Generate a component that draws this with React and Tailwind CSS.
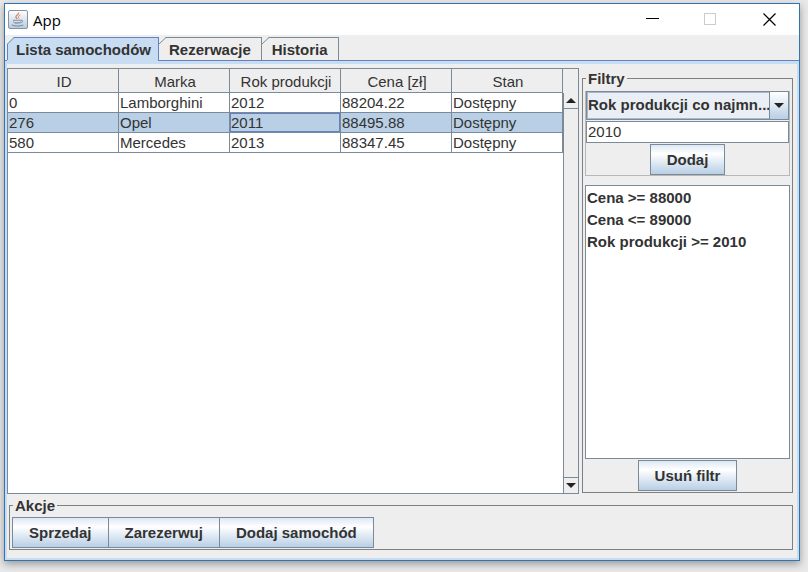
import React, { useState } from "react";

const TABS = ["Lista samochodów", "Rezerwacje", "Historia"];
const COLUMNS = ["ID", "Marka", "Rok produkcji", "Cena [zł]", "Stan"];
const CARS = [
  ["0", "Lamborghini", "2012", "88204.22", "Dostępny"],
  ["276", "Opel", "2011", "88495.88", "Dostępny"],
  ["580", "Mercedes", "2013", "88347.45", "Dostępny"],
];
const FILTERS = ["Cena >= 88000", "Cena <= 89000", "Rok produkcji >= 2010"];

function MetalButton({ children, className = "" }) {
  return (
    <button
      type="button"
      className={`h-[31px] border border-[#7a8a99] bg-linear-to-b from-[#dde8f3] via-white via-30% to-[#b8cfe5] px-4 text-[15px] leading-none font-bold whitespace-nowrap ${className}`}
    >
      {children}
    </button>
  );
}

function JavaIcon() {
  return (
    <svg width="20" height="20" viewBox="0 0 20 20" aria-hidden="true">
      <defs>
        <linearGradient id="tile" x1="0" y1="0" x2="0" y2="1">
          <stop offset="0" stopColor="#ffffff" />
          <stop offset="1" stopColor="#bccbd8" />
        </linearGradient>
      </defs>
      <rect x="0.5" y="0.5" width="19" height="18" rx="1.5" fill="url(#tile)" stroke="#8193a5" />
      <path d="M10.500 2.500c1 2-3 2.800-2.600 4.500.1 1 .9 1.300 1.200 2.100" fill="none" stroke="#d9825a" strokeWidth="1.300" />
      <path d="M12.300 5c-1.600.6-2.500 1.700-1.400 3.600" fill="none" stroke="#d9825a" />
      <path d="M5 9.800h8c0 2-.6 3.200-1.700 4H7C5.600 13 5 11.800 5 9.800z" fill="#8ba3ba" />
      <path d="M13 10.300c2.600-.3 2.200 2.200-.8 2.500M3.800 15c2.700 1.400 9 1.400 11.500 0" fill="none" stroke="#6d8aa8" />
      <path d="M6 11.500h6.200" stroke="#dbe4ec" />
    </svg>
  );
}

function Arrow({ up = false }) {
  return (
    <svg width="10" height="5" viewBox="0 0 10 5" aria-hidden="true">
      <path d={up ? "M0 5L5 0L10 5z" : "M0 0L5 5L10 0z"} fill="#222" />
    </svg>
  );
}

function TitleBar() {
  return (
    <header className="flex h-[31px] items-center bg-white pl-[3px]">
      <JavaIcon />
      <h1 className="ml-[5px] flex-1 font-['Open_Sans',sans-serif] text-[15px] leading-5 text-black">App</h1>
      <button type="button" aria-label="Minimalizuj" className="flex h-full w-[58px] items-center justify-center">
        <svg width="13" height="13"><path d="M0 5.500h13" stroke="#000" /></svg>
      </button>
      <button type="button" aria-label="Maksymalizuj" disabled className="flex h-full w-[58px] items-center justify-center">
        <svg width="12" height="13"><rect x="0.5" y="0.5" width="11" height="11" fill="none" stroke="#ccc" /></svg>
      </button>
      <button type="button" aria-label="Zamknij" className="flex h-full w-[60px] items-center justify-center">
        <svg width="13" height="13"><path d="M0.500 0.500l12 12M12.500 0.500l-12 12" stroke="#000" strokeWidth="1.200" /></svg>
      </button>
    </header>
  );
}

function Tabs({ active, onSelect }) {
  return (
    <div role="tablist" className="flex h-[26px] items-end border-b border-[#6382bf] bg-[#eee] pl-[2px]">
      {TABS.map((tab, i) => (
        <button
          key={tab}
          type="button"
          role="tab"
          aria-selected={i === active}
          onClick={() => onSelect(i)}
          className={`relative border-t border-r text-[15px] leading-none font-bold ${
            i === active
              ? "-mb-px h-[24px] border-[#6382bf] bg-[#c8ddf2] pr-[7px] pl-[9px]"
              : "h-[23px] border-[#7a8a99] bg-[#eee] px-[10px]"
          }`}
        >
          <svg className="absolute -top-px left-0" width="7" height="23" aria-hidden="true">
            <path d="M0 0H7L0 7z" fill="#eee" />
            <path d={i === active ? "M7 0.500L0.500 7V23" : "M7 0.500L0 7"} fill="none" stroke={i === active ? "#6382bf" : "#7a8a99"} />
          </svg>
          {tab}
        </button>
      ))}
    </div>
  );
}

function CarTable() {
  return (
    <div className="flex min-w-0 flex-1 border border-[#7a8a99] bg-white">
      <div className="min-w-0 flex-1">
        <table className="w-full table-fixed border-separate border-spacing-0 text-[15px] leading-[19px]">
          <thead>
            <tr>
              {COLUMNS.map((c) => (
                <th key={c} className="h-[24px] border-r border-b border-[#7a8a99] bg-[#eee] p-0 pt-[2px] pl-[2px] font-normal">{c}</th>
              ))}
            </tr>
          </thead>
          <tbody>
            {CARS.map((car, row) => (
              <tr key={car[0]} className={row === 1 ? "bg-[#b8cfe5]" : "bg-white"}>
                {car.map((value, col) => (
                  <td
                    key={col}
                    className={`h-[20px] border-r border-b border-[#7a8a99] py-0 pl-px ${
                      row === 1 && col === 2 ? "inset-ring inset-ring-[#6382bf]" : ""
                    }`}
                  >
                    {value}
                  </td>
                ))}
              </tr>
            ))}
          </tbody>
        </table>
      </div>
      <div className="flex w-[15px] flex-col bg-[#eee]">
        <div className="h-[24px]" />
        <button type="button" aria-label="W górę" className="flex h-[16px] items-center justify-center border-b border-l border-[#7a8a99]">
          <Arrow up />
        </button>
        <div className="flex-1 border-l border-[#7a8a99]" />
        <button type="button" aria-label="W dół" className="flex h-[16px] items-center justify-center border-t border-l border-[#7a8a99]">
          <Arrow />
        </button>
      </div>
    </div>
  );
}

function Filters() {
  return (
    <fieldset className="mt-[2px] mb-px flex w-[211px] shrink-0 flex-col border border-[#808080] px-[2px] pb-px">
      <legend className="ml-px px-[2px] text-[15px] leading-[17px] font-bold">Filtry</legend>
      <div className="mt-1 flex flex-col items-center border border-t-0 border-[#b8b8b8]">
        <div className="relative w-full">
          <select
            aria-label="Rodzaj filtra"
            className="block h-[29px] w-full appearance-none border border-[#7a8a99] bg-[#eaeff5] pr-[19px] pl-px text-[15px] font-bold inset-ring inset-ring-[#a9b8c8]"
          >
            <option>Rok produkcji co najmn...</option>
          </select>
          <span className="pointer-events-none absolute inset-y-0 right-0 flex w-[20px] items-center justify-center border border-[#7a8a99] bg-linear-to-b from-white to-[#b8cfe5]">
            <Arrow />
          </span>
        </div>
        <input
          aria-label="Wartość filtra"
          defaultValue="2010"
          className="mt-px h-[22px] w-full border border-[#7a8a99] bg-white px-px text-[15px]"
        />
        <MetalButton className="mt-px">Dodaj</MetalButton>
      </div>
      <ul className="mt-[9px] min-h-20 flex-1 border border-[#7a8a99] bg-white px-px pt-px text-[15px] leading-[22px] font-bold">
        {FILTERS.map((f) => (
          <li key={f}>{f}</li>
        ))}
      </ul>
      <MetalButton className="mt-px self-center">Usuń filtr</MetalButton>
    </fieldset>
  );
}

export default function App() {
  const [active, setActive] = useState(0);
  return (
    <div className="flex min-h-screen flex-col bg-[#e9e9e9] pt-[3px] pr-2 pb-[11px] pl-1 font-['Liberation_Sans',Arial,sans-serif] text-[#333]">
      <div className="flex flex-1 flex-col border border-[#2f75b5] bg-[#eee] shadow-[0_3px_8px_rgba(0,0,0,0.35)]">
        <TitleBar />
        <Tabs active={active} onSelect={setActive} />
        <main className="flex flex-1 flex-col border-2 border-t-[3px] border-[#c8ddf2] pt-[4px]">
          <div className="flex flex-1 gap-[3px] pr-[4px]">
            <CarTable />
            <Filters />
          </div>
          <fieldset className="mt-[3px] mr-1 mb-2 ml-[2px] flex border border-[#808080] px-[2px] pt-[3px] pb-px">
            <legend className="ml-px px-[2px] text-[15px] leading-[17px] font-bold">Akcje</legend>
            <MetalButton>Sprzedaj</MetalButton>
            <MetalButton className="-ml-px">Zarezerwuj</MetalButton>
            <MetalButton className="-ml-px">Dodaj samochód</MetalButton>
          </fieldset>
        </main>
      </div>
    </div>
  );
}
